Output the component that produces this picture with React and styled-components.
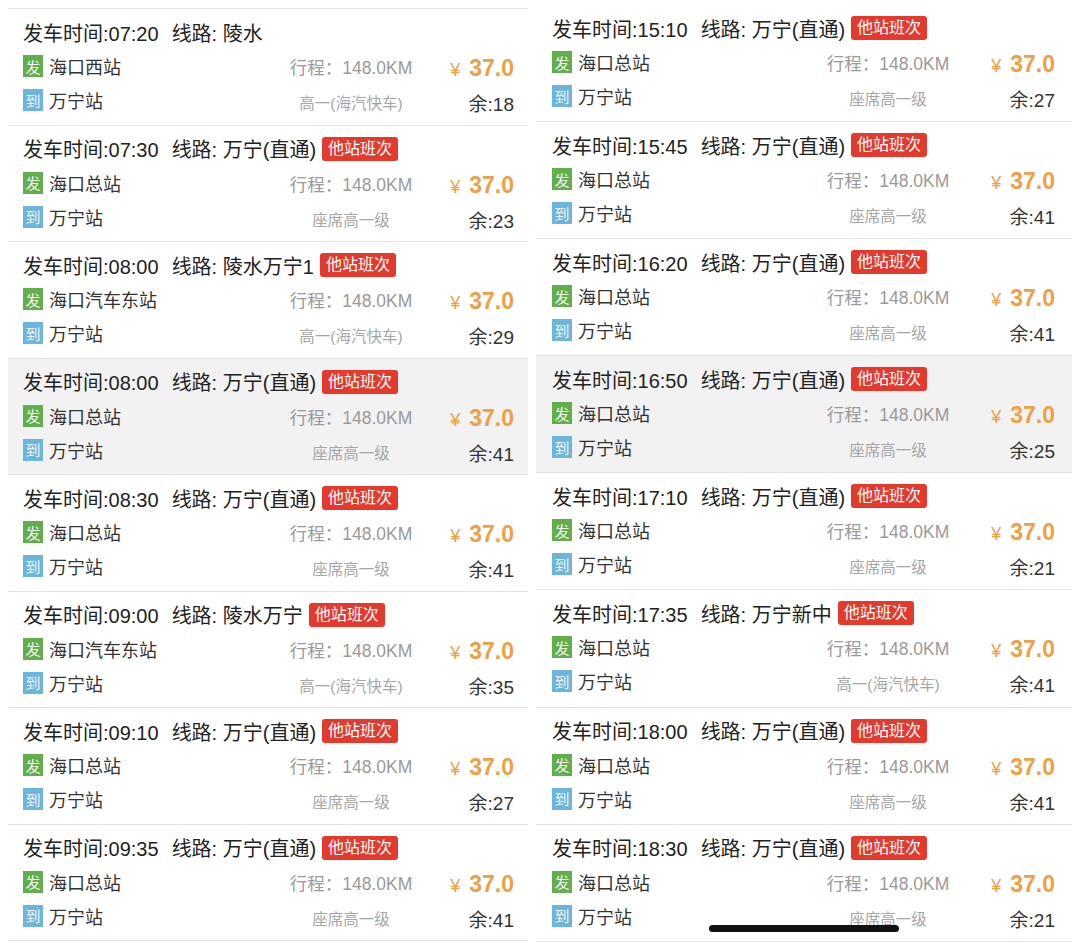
import React from "react";
import styled, { createGlobalStyle } from "styled-components";

const GlobalStyle = createGlobalStyle`
  html, body {
    margin: 0;
    padding: 0;
    background: #fff;
  }
  body {
    font-family: "Liberation Sans", "Noto Sans CJK SC", sans-serif;
    color: #222;
  }
`;

const Page = styled.div`
  position: relative;
  display: flex;
  align-items: flex-start;
  gap: 8px;
  width: 1080px;
  height: 952px;
  padding-left: 8px;
  box-sizing: border-box;
  overflow: hidden;
`;

const Column = styled.div`
  width: ${(p) => p.$width}px;
  margin-top: ${(p) => p.$top}px;
  border-top: ${(p) => (p.$topLine ? "1px solid #e6e6e6" : "none")};
  display: flex;
  flex-direction: column;
`;

const Card = styled.div`
  height: ${(p) => p.$h}px;
  box-sizing: border-box;
  border-bottom: 1px solid #e4e4e4;
  background: ${(p) => (p.$active ? "#f2f2f2" : "#fff")};
  display: grid;
  grid-template-columns: 1fr ${(p) => p.$mid}px ${(p) => p.$right}px;
  grid-template-rows: 29px 32px 32px;
  row-gap: 2px;
  padding: 10px ${(p) => p.$pr}px 0 ${(p) => p.$pl}px;
`;

const Title = styled.div`
  grid-column: 1 / -1;
  align-self: start;
  height: 26px;
  display: flex;
  align-items: center;
  font-size: 20px;
  color: #222;
  white-space: nowrap;
`;

const Route = styled.span`
  margin-left: 13px;
`;

const Tag = styled.span`
  margin-left: 6px;
  background: #e4392d;
  color: #fff;
  font-size: 16px;
  line-height: 24px;
  height: 24px;
  padding: 0 6px;
  border-radius: 3px;
`;

const Station = styled.div`
  display: flex;
  align-items: center;
  gap: 6px;
  font-size: 18px;
  color: #333;
  white-space: nowrap;
`;

const Badge = styled.span`
  width: 20px;
  height: 22px;
  display: inline-flex;
  align-items: center;
  justify-content: center;
  font-size: 15px;
  color: rgba(255, 255, 255, 0.92);
  background: ${(p) => (p.$kind === "to" ? "#6cb5dd" : "#63ae4c")};
`;

const Middle = styled.div`
  justify-self: center;
  align-self: center;
  white-space: nowrap;
  color: ${(p) => (p.$small ? "#a6a6a6" : "#9a9a9a")};
  font-size: ${(p) => (p.$small ? "15.5px" : "17.5px")};
  margin-top: ${(p) => (p.$small ? "4px" : "1px")};
`;

const Price = styled.div`
  justify-self: end;
  align-self: center;
  margin-top: 5px;
  display: flex;
  align-items: baseline;
  gap: 9px;
  color: #efa047;
  white-space: nowrap;
`;

const Yen = styled.span`
  font-size: 18px;
`;

const Amount = styled.span`
  font-size: 23px;
  font-weight: 700;
`;

const Remain = styled.div`
  justify-self: end;
  align-self: center;
  margin-top: 5px;
  font-size: 19px;
  color: #333;
  white-space: nowrap;
`;

const HomeBar = styled.div`
  position: absolute;
  left: 709px;
  top: 925px;
  width: 190px;
  height: 7px;
  border-radius: 4px;
  background: #111;
`;

const left = [
  { time: "07:20", route: "陵水", from: "海口西站", seat: "高一(海汽快车)", rest: 18, tag: false },
  { time: "07:30", route: "万宁(直通)", from: "海口总站", seat: "座席高一级", rest: 23 },
  { time: "08:00", route: "陵水万宁1", from: "海口汽车东站", seat: "高一(海汽快车)", rest: 29 },
  { time: "08:00", route: "万宁(直通)", from: "海口总站", seat: "座席高一级", rest: 41, active: true },
  { time: "08:30", route: "万宁(直通)", from: "海口总站", seat: "座席高一级", rest: 41 },
  { time: "09:00", route: "陵水万宁", from: "海口汽车东站", seat: "高一(海汽快车)", rest: 35 },
  { time: "09:10", route: "万宁(直通)", from: "海口总站", seat: "座席高一级", rest: 27 },
  { time: "09:35", route: "万宁(直通)", from: "海口总站", seat: "座席高一级", rest: 41 },
];

const right = [
  { time: "15:10", route: "万宁(直通)", from: "海口总站", seat: "座席高一级", rest: 27 },
  { time: "15:45", route: "万宁(直通)", from: "海口总站", seat: "座席高一级", rest: 41 },
  { time: "16:20", route: "万宁(直通)", from: "海口总站", seat: "座席高一级", rest: 41 },
  { time: "16:50", route: "万宁(直通)", from: "海口总站", seat: "座席高一级", rest: 25, active: true },
  { time: "17:10", route: "万宁(直通)", from: "海口总站", seat: "座席高一级", rest: 21 },
  { time: "17:35", route: "万宁新中", from: "海口总站", seat: "高一(海汽快车)", rest: 41 },
  { time: "18:00", route: "万宁(直通)", from: "海口总站", seat: "座席高一级", rest: 41 },
  { time: "18:30", route: "万宁(直通)", from: "海口总站", seat: "座席高一级", rest: 21 },
];

const TripCard = ({ trip, geo }) => (
  <Card
    $active={trip.active}
    $h={geo.h}
    $mid={geo.mid}
    $right={geo.right}
    $pl={geo.pl}
    $pr={geo.pr}
  >
    <Title>
      <span>发车时间:{trip.time}</span>
      <Route>线路: {trip.route}</Route>
      {trip.tag !== false && <Tag>他站班次</Tag>}
    </Title>
    <Station>
      <Badge $kind="from">发</Badge>
      {trip.from}
    </Station>
    <Middle>行程：148.0KM</Middle>
    <Price>
      <Yen>¥</Yen>
      <Amount>37.0</Amount>
    </Price>
    <Station>
      <Badge $kind="to">到</Badge>
      万宁站
    </Station>
    <Middle $small>{trip.seat}</Middle>
    <Remain>余:{trip.rest}</Remain>
  </Card>
);

const leftGeo = { h: 116.5, mid: 150, right: 88, pl: 15, pr: 14 };
const rightGeo = { h: 117.1, mid: 150, right: 92, pl: 16, pr: 17 };

export default function App() {
  return (
    <>
      <GlobalStyle />
      <Page>
        <Column $width={520} $top={8} $topLine>
          {left.map((t, i) => (
            <TripCard key={i} trip={t} geo={leftGeo} />
          ))}
        </Column>
        <Column $width={536} $top={5}>
          {right.map((t, i) => (
            <TripCard key={i} trip={t} geo={rightGeo} />
          ))}
        </Column>
        <HomeBar />
      </Page>
    </>
  );
}
